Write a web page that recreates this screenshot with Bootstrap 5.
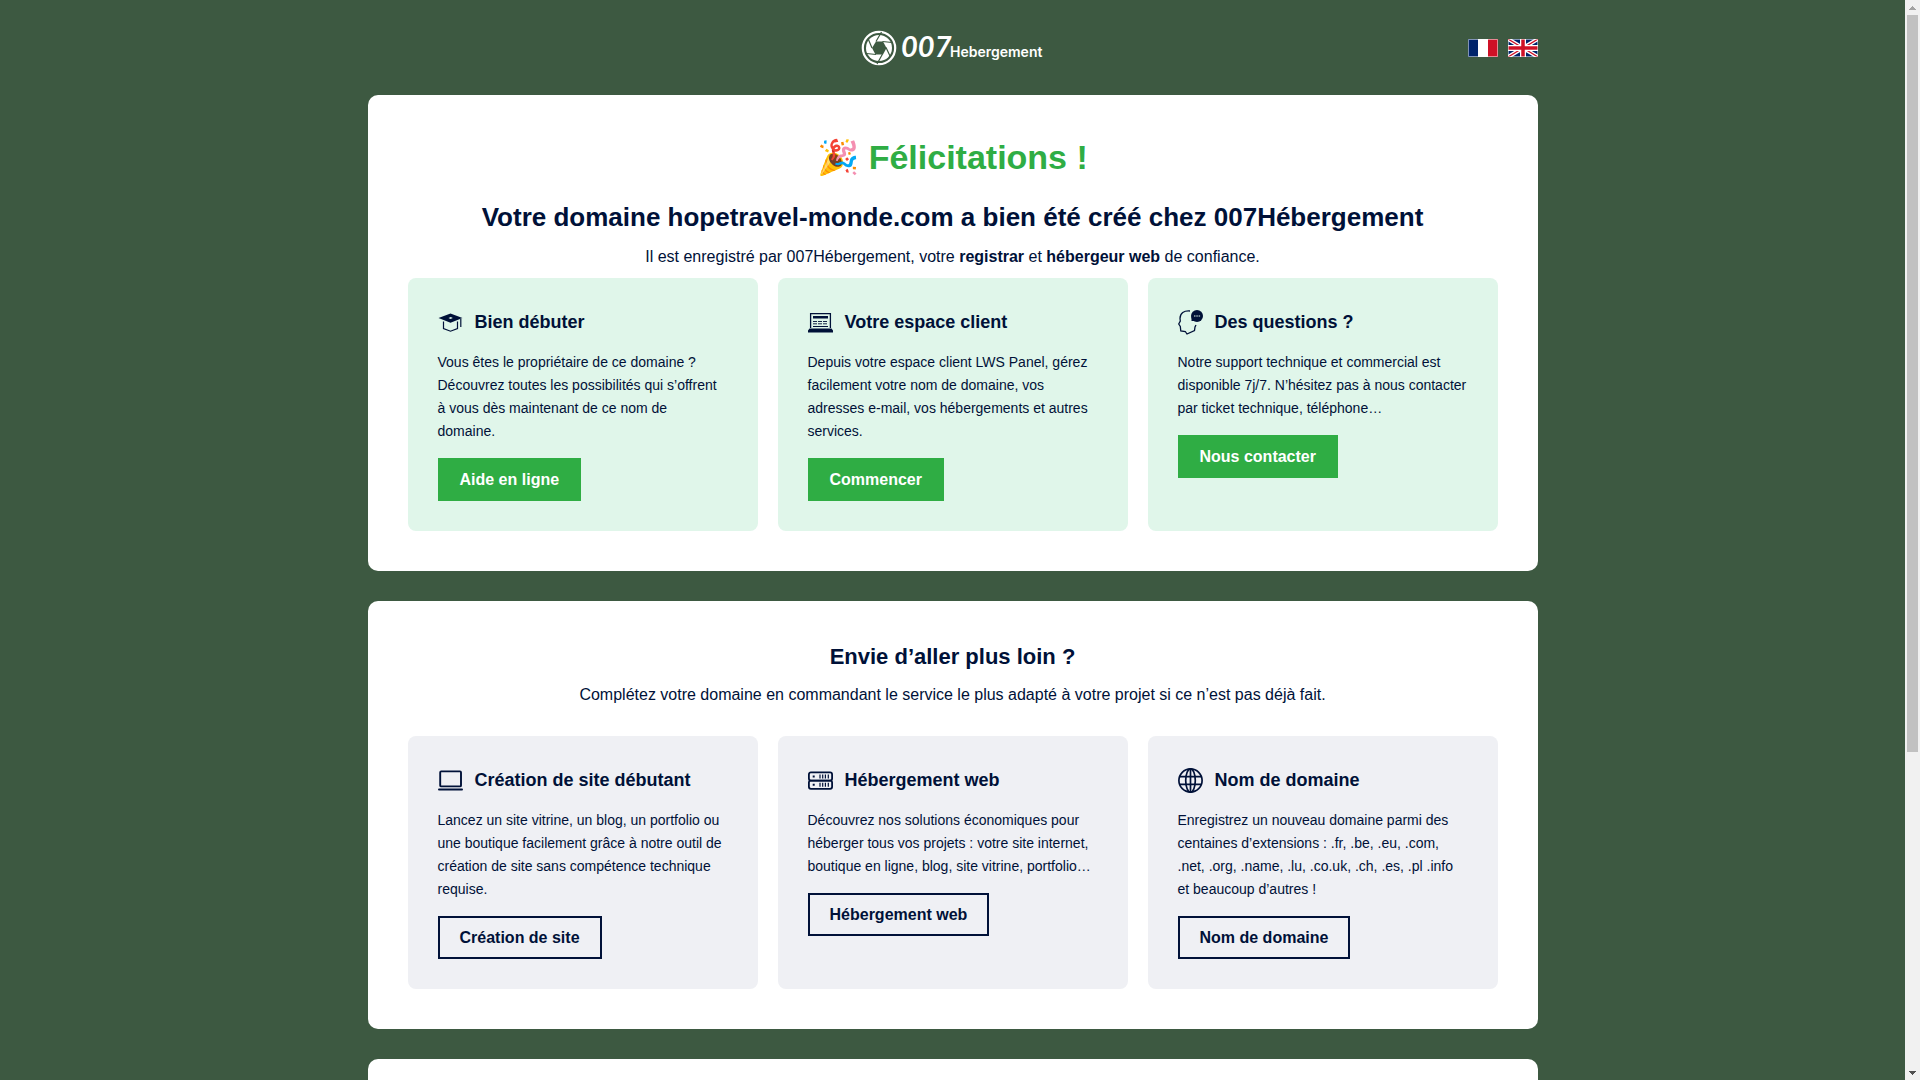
<!DOCTYPE html>
<html lang="fr">
<head>
<meta charset="utf-8">
<meta name="viewport" content="width=device-width, initial-scale=1">
<title>007Hébergement</title>
<link href="https://cdn.jsdelivr.net/npm/bootstrap@5.3.0/dist/css/bootstrap.min.css" rel="stylesheet">
<style>
:root { --navy: #001138; --brand: #2fad44; --forest: #3d5941; }
html::-webkit-scrollbar { display: none; }
body { background: var(--forest); color: var(--navy); font-family: "Liberation Sans", Arial, sans-serif; font-size: 16px; line-height: 27px; padding-right: 15px; }
.page-wrap { max-width: 1170px; }
.page-head { height: 95px; }
.brand-logo { overflow: visible; }
.lang-nav { gap: 10px; }
.lang-nav svg { display: block; }
.panel { background: #fff; border-radius: 10px; padding: 40px; margin-bottom: 30px; }
.panel-next { min-height: 450px; }
h1 { font-size: 34px; line-height: 44px; font-weight: 700; color: var(--brand); margin-bottom: 20px; }
.domain-title { font-size: 26px; line-height: 36px; font-weight: 700; margin-bottom: 8px; }
.more-title { font-size: 22px; line-height: 32px; font-weight: 700; margin-bottom: 8px; }
.intro { margin-bottom: 8px; }
.intro-more { margin-bottom: 28px; }
.offers { --bs-gutter-x: 20px; }
.offer { border-radius: 8px; padding: 30px; height: 100%; }
.offer-mint { background: #e0f6ea; }
.offer-grey { background: #eff0f4; }
.offer-title { font-size: 18px; line-height: 28px; font-weight: 700; gap: 12px; margin-bottom: 15px; }
.offer-title svg { flex: none; }
.offer p { font-size: 14px; line-height: 23px; margin-bottom: 15px; }
.offer .btn { --bs-btn-padding-x: 20px; --bs-btn-padding-y: 8px; --bs-btn-border-width: 2px; --bs-btn-border-radius: 0; --bs-btn-font-weight: 700; line-height: 23px; display: block; width: fit-content; }
.btn-brand { --bs-btn-bg: var(--brand); --bs-btn-border-color: var(--brand); --bs-btn-color: #fff; --bs-btn-hover-bg: #27963a; --bs-btn-hover-color: #fff; }
.btn-line { --bs-btn-border-color: var(--navy); --bs-btn-color: var(--navy); --bs-btn-hover-bg: var(--navy); --bs-btn-hover-color: #fff; }
.scroll-rail { width: 15px; background: #f1f1f1; padding: 6px 2px 5px; }
.scroll-thumb { width: 11px; flex: 0 0 auto; height: 68.25vh; background: #c1c1c1; margin-top: 5px; }
</style>
<script src="https://cdn.jsdelivr.net/npm/bootstrap@5.3.0/dist/js/bootstrap.bundle.min.js"></script>
</head>
<body>
<div class="page-wrap mx-auto">
  <header class="page-head d-grid">
    <div class="row g-0 align-items-center">
      <div class="col"></div>
      <a class="col-auto" href="#" aria-label="007Hebergement">
        <svg class="brand-logo d-block" width="183" height="36" viewBox="0 0 183 36" fill="#fff">
          <circle cx="18" cy="18" r="16.2" fill="none" stroke="#fff" stroke-width="2.2"/>
          <circle cx="18" cy="18" r="13"/>
          <path d="M15 11.500h7l3.500 6.500-3.500 6.500h-7.500L11 18z" fill="#3d5941"/>
          <path d="M15 11.500l5.500-9.500M21.500 11.500l9.500 1M25 17.500l4.500 9.500M21.500 24l-5.500 10M15 24.500l-9.500-1M11 18L7 8.500" stroke="#3d5941" stroke-width="1.200" fill="none"/>
          <text x="40" y="27" font-family="Lato" font-weight="700" font-style="italic" font-size="29">007</text>
          <text x="89" y="27" font-family="Inter" font-weight="600" font-size="14">Hebergement</text>
        </svg>
      </a>
      <nav class="lang-nav col d-flex justify-content-end" aria-label="Langue">
        <a href="#" aria-label="Français">
          <svg width="30" height="18" viewBox="0 0 30 18"><path fill="#fff" d="M0 0h30v18H0z"/><path fill="#00246b" d="M0 0h10v18H0z"/><path fill="#cf1126" d="M20 0h10v18H20z"/><path d="M.5.5h29v17H.5z" fill="none" stroke="#fff" stroke-opacity=".5"/></svg>
        </a>
        <a href="#" aria-label="English">
          <svg width="30" height="18" viewBox="0 0 30 18"><path fill="#00246b" d="M0 0h30v18H0z"/><path d="M0 0l30 18M30 0L0 18" stroke="#fff" stroke-width="4"/><path d="M0 0l15 9M30 0L15 9M0 18l15-9M30 18L15 9" stroke="#cf1126" stroke-width="1.300"/><path d="M15 0v18M0 9h30" stroke="#fff" stroke-width="6"/><path d="M15 0v18M0 9h30" stroke="#cf1126" stroke-width="3.500"/><path d="M.5.5h29v17H.5z" fill="none" stroke="#fff" stroke-opacity=".5"/></svg>
        </a>
      </nav>
    </div>
  </header>

  <main>
    <section class="panel">
      <div class="text-center">
        <h1>🎉 Félicitations !</h1>
        <h2 class="domain-title">Votre domaine hopetravel-monde.com a bien été créé chez 007Hébergement</h2>
        <p class="intro">Il est enregistré par 007Hébergement, votre <strong>registrar</strong> et <strong>hébergeur web</strong> de confiance.</p>
      </div>
      <div class="row offers">
        <div class="col-4"><article class="offer offer-mint">
          <h3 class="offer-title d-flex align-items-center">
            <svg width="25" height="25" viewBox="0 0 25 25"><path fill="#001138" fill-rule="evenodd" d="M12.500 3.500L24.500 8 12.500 12.800.5 8zM10.500 8l2 .9 2.300-1-2-.9z"/><path d="M5.500 11.500v7l7 2.700 7-2.700v-7M22.800 9v8" fill="none" stroke="#001138" stroke-width="1.200"/></svg>
            Bien débuter</h3>
          <p>Vous êtes le propriétaire de ce domaine ? Découvrez toutes les possibilités qui s’offrent à vous dès maintenant de ce nom de domaine.</p>
          <a class="btn btn-brand" href="#">Aide en ligne</a>
        </article></div>
        <div class="col-4"><article class="offer offer-mint">
          <h3 class="offer-title d-flex align-items-center">
            <svg width="25" height="25" viewBox="0 0 25 25"><path d="M2.600 18V3.600h19.800V18" fill="none" stroke="#001138" stroke-width="1.300"/><path fill="#001138" d="M5 6h15v2.500H5zM5 16h15v1H5zM1.500 18.500h22L25 20.500v2H0v-2z"/><path d="M5 11.500h15M5 13.800h15" stroke="#001138" stroke-width=".9" stroke-dasharray="4 1"/></svg>
            Votre espace client</h3>
          <p>Depuis votre espace client LWS Panel, gérez facilement votre nom de domaine, vos adresses e-mail, vos hébergements et autres services.</p>
          <a class="btn btn-brand" href="#">Commencer</a>
        </article></div>
        <div class="col-4"><article class="offer offer-mint">
          <h3 class="offer-title d-flex align-items-center">
            <svg width="25" height="25" viewBox="0 0 25 25"><path d="M12 1C6 .5 2 3 2 8.500L2.300 11 .7 14l1.600 2.500.5 4.500 4.500.500L9 24l7.500-3.500L17 17l1-2" fill="none" stroke="#001138" stroke-width="1.300"/><circle cx="19" cy="6" r="6" fill="#001138"/><path fill="#001138" d="M13.500 7v4l4 0z"/><path d="M16 6h1.500M18.300 6h1.500M20.600 6h1.500" stroke="#e0f6ea" stroke-width="1"/></svg>
            Des questions ?</h3>
          <p>Notre support technique et commercial est disponible 7j/7. N’hésitez pas à nous contacter par ticket technique, téléphone…</p>
          <a class="btn btn-brand" href="#">Nous contacter</a>
        </article></div>
      </div>
    </section>

    <section class="panel">
      <div class="text-center">
        <h2 class="more-title">Envie d’aller plus loin ?</h2>
        <p class="intro-more">Complétez votre domaine en commandant le service le plus adapté à votre projet si ce n’est pas déjà fait.</p>
      </div>
      <div class="row offers">
        <div class="col-4"><article class="offer offer-grey">
          <h3 class="offer-title d-flex align-items-center">
            <svg width="25" height="25" viewBox="0 0 25 25"><rect x="2.200" y="3.400" width="20.800" height="15" rx="1" fill="none" stroke="#001138" stroke-width="1.900"/><path d="M1 21.500h23" stroke="#001138" stroke-width="2" stroke-linecap="round"/></svg>
            Création de site débutant</h3>
          <p>Lancez un site vitrine, un blog, un portfolio ou une boutique facilement grâce à notre outil de création de site sans compétence technique requise.</p>
          <a class="btn btn-line" href="#">Création de site</a>
        </article></div>
        <div class="col-4"><article class="offer offer-grey">
          <h3 class="offer-title d-flex align-items-center">
            <svg width="25" height="25" viewBox="0 0 25 25" fill="none" stroke="#001138"><g stroke-width="1.800"><rect x=".9" y="4.400" width="23.200" height="8.200" rx="2"/><rect x=".9" y="12.600" width="23.200" height="8.200" rx="2"/></g><path stroke-width="1.200" d="M12 6.500v4M14.700 6.500v4M17.400 6.500v4M20.300 6.500v4M12 14.700v4M14.700 14.700v4M17.400 14.700v4M20.300 14.700v4"/><path stroke-width="2" d="M4.700 8.500h2M4.700 16.700h2"/></svg>
            Hébergement web</h3>
          <p>Découvrez nos solutions économiques pour héberger tous vos projets : votre site internet, boutique en ligne, blog, site vitrine, portfolio…</p>
          <a class="btn btn-line" href="#">Hébergement web</a>
        </article></div>
        <div class="col-4"><article class="offer offer-grey">
          <h3 class="offer-title d-flex align-items-center">
            <svg width="25" height="25" viewBox="0 0 25 25" fill="none" stroke="#001138" stroke-width="1.700"><circle cx="12.500" cy="12.500" r="11.600"/><ellipse cx="12.500" cy="12.500" rx="4.800" ry="11.600"/><path d="M12.500 1v23M1.700 8.700h21.600M1.700 16.300h21.600"/></svg>
            Nom de domaine</h3>
          <p>Enregistrez un nouveau domaine parmi des centaines d’extensions : .fr, .be, .eu, .com, .net, .org, .name, .lu, .co.uk, .ch, .es, .pl .info et beaucoup d’autres !</p>
          <a class="btn btn-line" href="#">Nom de domaine</a>
        </article></div>
      </div>
    </section>

    <section class="panel panel-next"></section>
  </main>
</div>

<div class="scroll-rail position-fixed top-0 end-0 h-100 d-flex flex-column align-items-center" aria-hidden="true">
  <svg width="7" height="4" viewBox="0 0 7 4"><path fill="#a3a3a3" d="M3 0h1v1h1v1h1v1h1v1H0V3h1V2h1V1h1z"/></svg>
  <div class="scroll-thumb"></div>
  <svg class="mt-auto" width="7" height="4" viewBox="0 0 7 4"><path fill="#505050" d="M3 4h1V3h1V2h1V1h1V0H0v1h1v1h1v1h1z"/></svg>
</div>
</body>
</html>
